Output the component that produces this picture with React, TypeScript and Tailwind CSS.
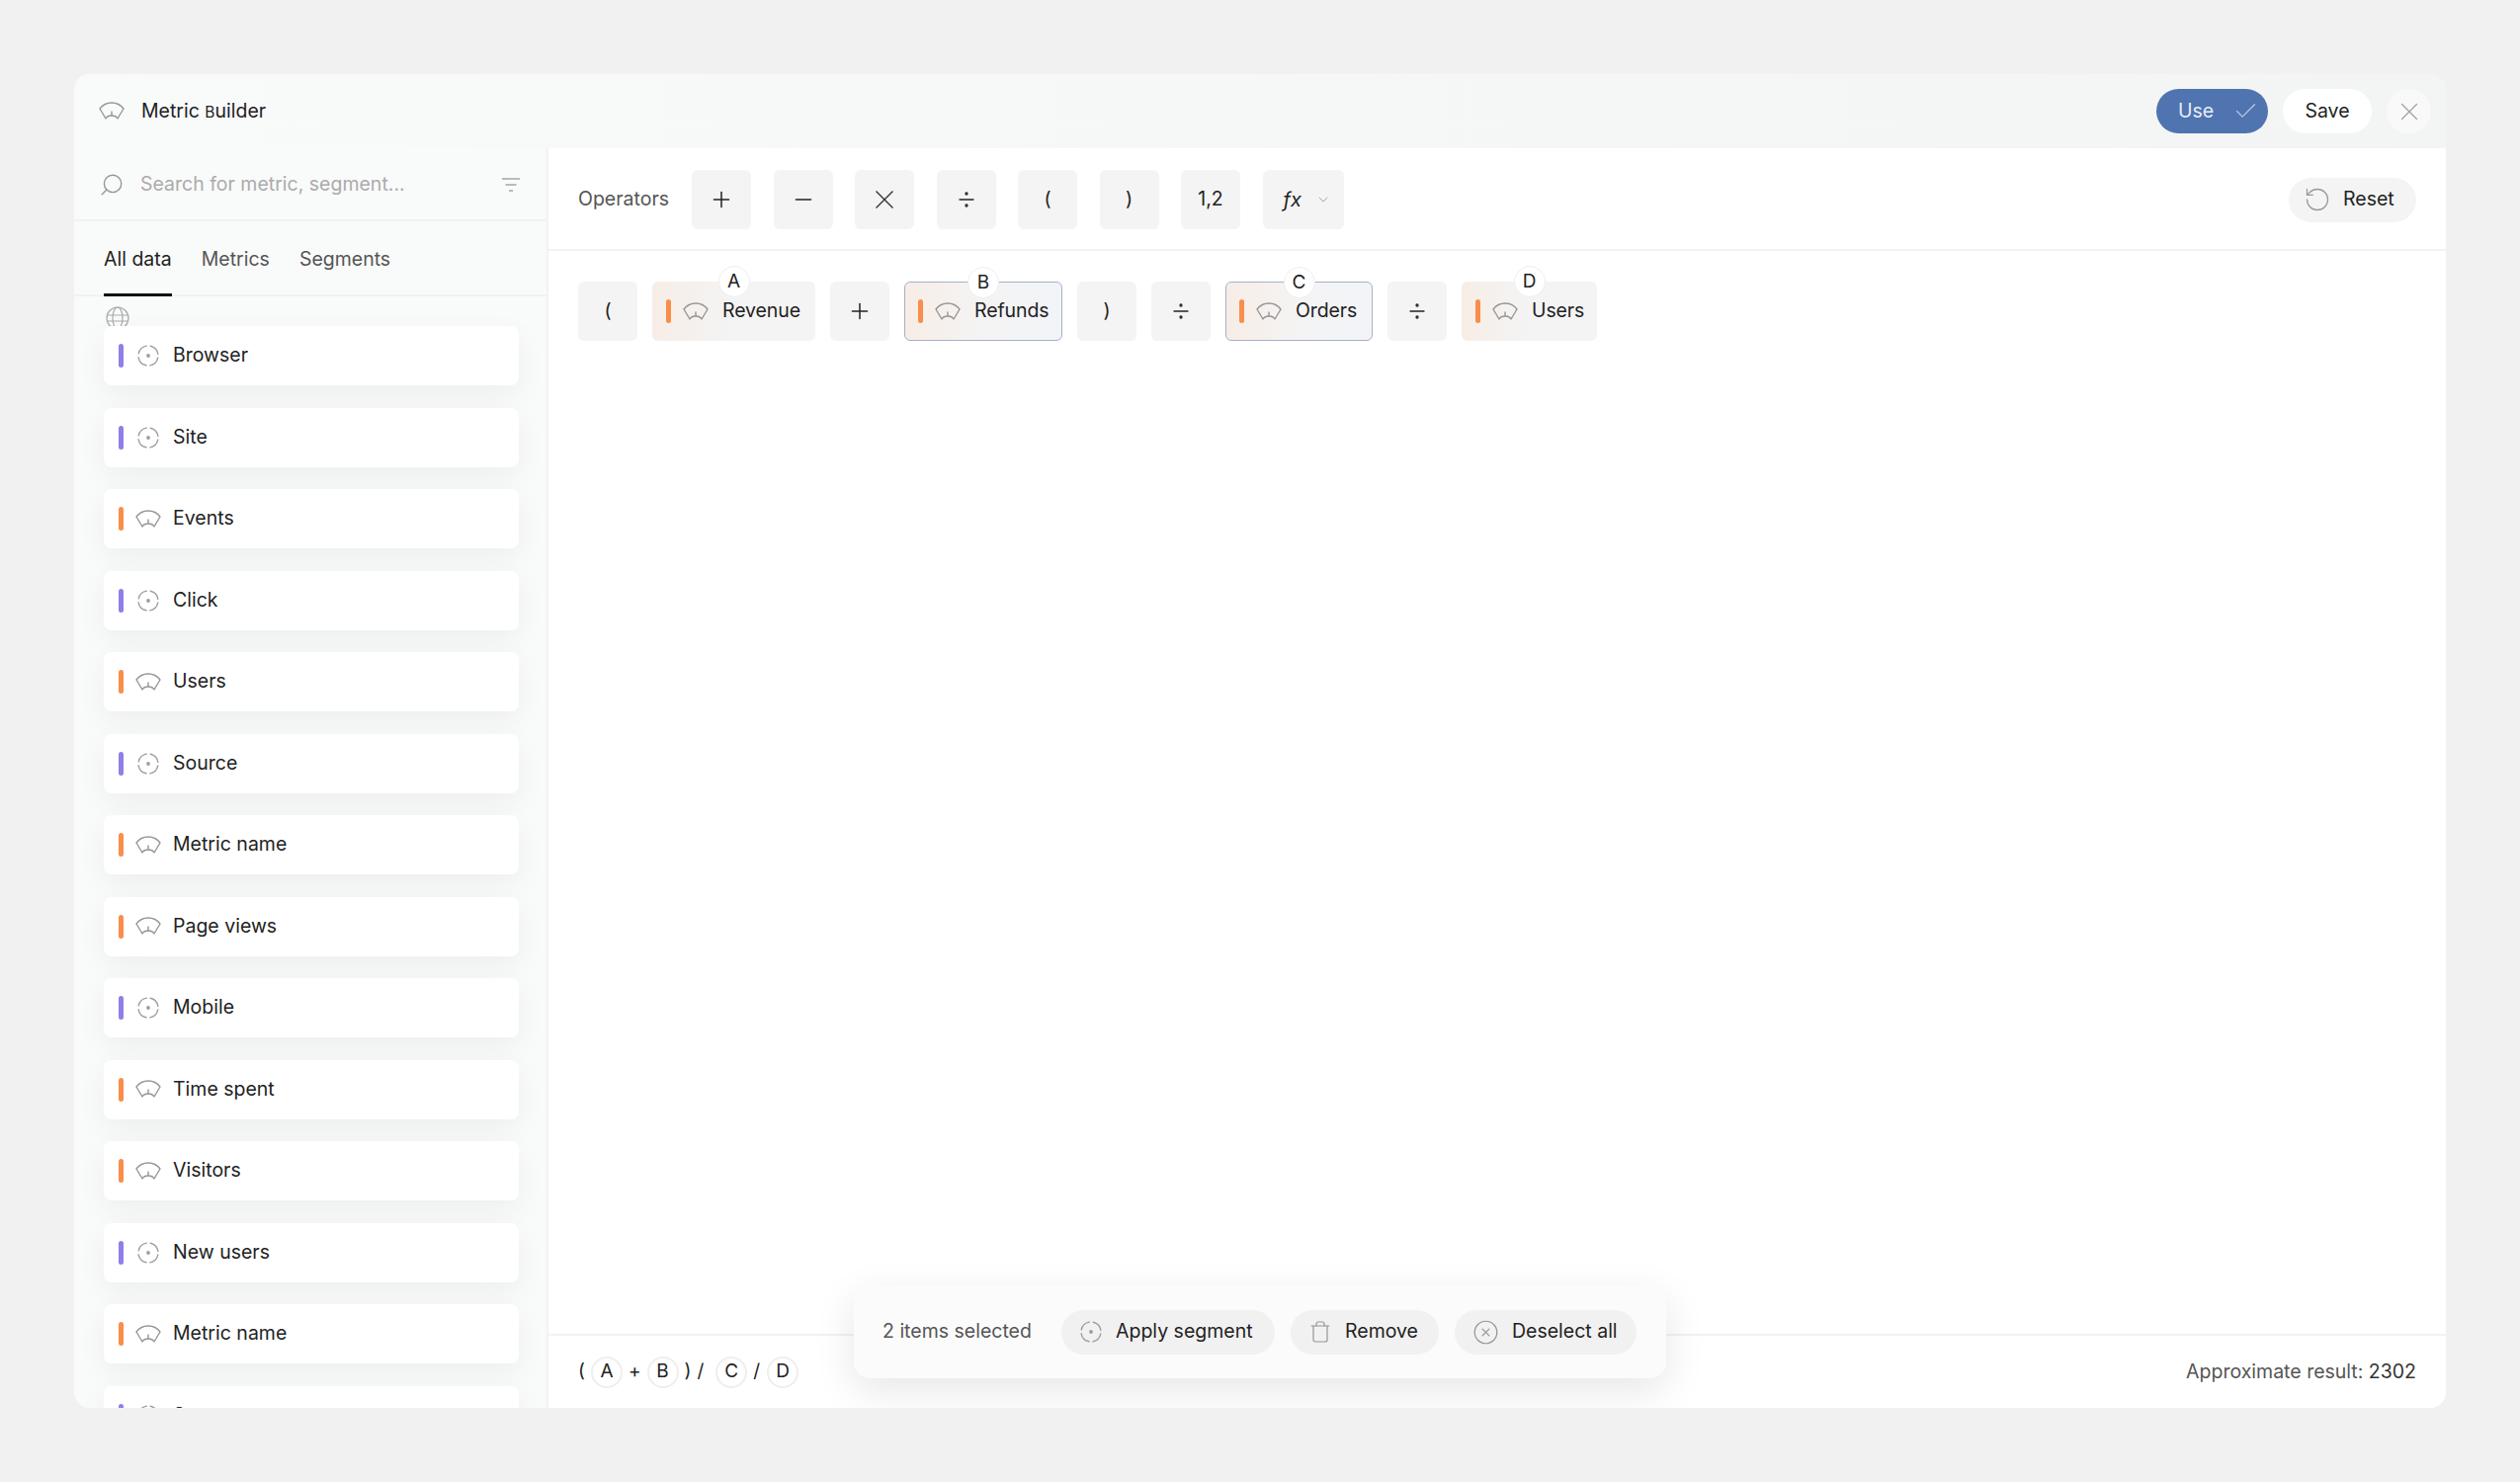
import React from 'react'
import { Search, X, Check, ChevronDown, RotateCcw, Trash, Plus, Minus, Divide, CircleX } from 'lucide-react'

type ItemKind = 'metric' | 'segment'

interface ListItem {
  name: string
  kind: ItemKind
}

const items: ListItem[] = [
  { name: 'Browser', kind: 'segment' },
  { name: 'Site', kind: 'segment' },
  { name: 'Events', kind: 'metric' },
  { name: 'Click', kind: 'segment' },
  { name: 'Users', kind: 'metric' },
  { name: 'Source', kind: 'segment' },
  { name: 'Metric name', kind: 'metric' },
  { name: 'Page views', kind: 'metric' },
  { name: 'Mobile', kind: 'segment' },
  { name: 'Time spent', kind: 'metric' },
  { name: 'Visitors', kind: 'metric' },
  { name: 'New users', kind: 'segment' },
  { name: 'Metric name', kind: 'metric' },
  { name: 'Source', kind: 'segment' },
]

// Fan shaped gauge used for metrics
const MetricIcon = () => (
  <svg width="26" height="19" viewBox="0 0 26 19" fill="none" stroke="#969696" strokeWidth="1.4" strokeLinejoin="round" className="shrink-0">
    <path d="M1 7C4 3 8 1 13 1s9 2 12 6l-6 10c-1-2-3.500-3-6-3s-5 1-6 3L1 7Z" />
    <path d="M13 14V9.500" />
  </svg>
)

// Dashed ring with a dot used for segments
const SegmentIcon = () => (
  <svg width="24" height="24" viewBox="0 0 24 24" fill="none" stroke="#9e9e9e" strokeWidth="1.4" strokeLinecap="round" className="shrink-0">
    <circle cx="12" cy="12" r="10" strokeDasharray="11.7 4" strokeDashoffset="-2" />
    <circle cx="12" cy="12" r="1.900" fill="#9e9e9e" stroke="none" />
  </svg>
)

const FilterIcon = () => (
  <svg width="20" height="16" viewBox="0 0 20 16" fill="none" stroke="#a5a5a5" strokeWidth="1.3">
    <path d="M1 2h18M4.500 8h11M8 14h4" />
  </svg>
)

const GlobeIcon = () => (
  <svg width="24" height="24" viewBox="0 0 24 24" fill="none" stroke="#a9a9a9" strokeWidth="1.2">
    <circle cx="12" cy="12" r="11" />
    <ellipse cx="12" cy="12" rx="5" ry="11" />
    <path d="M1 9h22M1 15h22" />
  </svg>
)

const TimesIcon = () => (
  <svg width="20" height="20" viewBox="0 0 20 20" fill="none" stroke="#333" strokeWidth="1.400">
    <path d="M1.500 1.500l17 17M18.500 1.500l-17 17" />
  </svg>
)

const OpButton = ({ children }: { children: React.ReactNode }) => (
  <button className="w-[60px] h-[60px] rounded-md bg-[#f4f4f4] flex items-center justify-center text-[19.500px] text-[#222] shrink-0">
    {children}
  </button>
)

const FormulaChip = ({ letter, name, selected, width }: { letter: string; name: string; selected?: boolean; width: string }) => (
  <div
    className={`relative h-[60px] ${width} rounded-md flex items-center bg-gradient-to-r from-[#f7ede6] via-[#f4f4f4] via-50% text-[19.500px] text-[#222] shrink-0 ${
      selected ? 'pl-[13px] to-[#f2f4f8] border-[1.500px] border-[#a7aecb]' : 'pl-[14px] to-[#f4f4f4]'
    }`}
  >
    <div className="w-[5px] h-[24px] rounded-sm bg-[#f98e4a]" />
    <div className="ml-[12px]">
      <MetricIcon />
    </div>
    <span className="ml-[14px] tracking-[-0.1px]">{name}</span>
    <div className="absolute left-1/2 -translate-x-1/2 -top-[16px] w-[32px] h-[32px] rounded-full bg-white border border-[#eeeeee] flex items-center justify-center text-[19px]">
      {letter}
    </div>
  </div>
)

const SmallLetter = ({ children, className }: { children: React.ReactNode; className?: string }) => (
  <div className={`w-[32px] h-[32px] rounded-full bg-white border-2 border-[#eeeeee] flex items-center justify-center ${className ?? ''}`}>
    {children}
  </div>
)

const PillButton = ({ icon, label, width }: { icon: React.ReactNode; label: string; width: string }) => (
  <button className={`h-[45px] ${width} rounded-full bg-[#f1f1f1] flex items-center pl-[18px] gap-[13px] text-[19.500px] text-[#222]`}>
    {icon}
    <span>{label}</span>
  </button>
)

const Sidebar = () => (
  <div className="w-[480px] shrink-0 flex flex-col min-h-0 border-r-2 border-[#f2f3f3]">
    {/* Search */}
    <div className="h-[74px] shrink-0 flex items-center pl-[25px] pr-[26px] pt-[2px] border-b-2 border-[#f1f2f2]">
      <Search className="w-[26px] h-[26px] text-[#969696] -scale-x-100" strokeWidth={1.300} />
      <span className="ml-[16px] text-[19.500px] text-[#ababab] flex-1">Search for metric, segment...</span>
      <FilterIcon />
    </div>
    {/* Tabs */}
    <div className="h-[76px] shrink-0 flex gap-[30px] px-[30px] pt-[4px] border-b-2 border-[#f1f2f2] text-[19.500px]">
      <div className="relative flex items-center text-[#222]">
        All data
        <div className="absolute left-0 right-0 -bottom-[2px] h-[3px] bg-[#111]" />
      </div>
      <div className="flex items-center text-[#555]">Metrics</div>
      <div className="flex items-center text-[#555]">Segments</div>
    </div>
    {/* List */}
    <div className="relative flex-1 min-h-0 overflow-hidden pl-[30px] pr-[28px] pt-[30px] flex flex-col gap-[22.500px]">
      <div className="absolute left-[32px] top-[10px]">
        <GlobeIcon />
      </div>
      {items.map((item, i) => (
        <div
          key={i}
          className="relative h-[60px] shrink-0 rounded-lg bg-white shadow-[0_10px_30px_rgba(0,0,0,0.05)] flex items-center pl-[15px] text-[19.500px] text-[#222]"
        >
          <div className={`w-[5px] h-[24px] rounded-sm ${item.kind === 'metric' ? 'bg-[#f98e4a]' : 'bg-[#8f7fe6]'}`} />
          <div className="w-[28px] ml-[11px] flex justify-center">
            {item.kind === 'metric' ? <MetricIcon /> : <SegmentIcon />}
          </div>
          <span className="ml-[11px]">{item.name}</span>
        </div>
      ))}
    </div>
  </div>
)

const App = () => {
  return (
    <div className="w-[2550px] h-[1500px] bg-[#f1f1f1] p-[75px] font-['Inter',sans-serif] overflow-hidden">
      <div className="relative w-[2400px] h-[1350px] rounded-2xl overflow-hidden bg-[#f9fafa] flex flex-col">
        {/* Header */}
        <div className="h-[75px] shrink-0 flex items-center pl-[25px] pr-[15px] bg-gradient-to-r from-[#f9fafa] to-[#f3f4f4]">
          <MetricIcon />
          <span className="ml-[17px] text-[19.500px] text-[#222]">
            Metric <span className="text-[15.500px]">B</span>uilder
          </span>
          <div className="ml-auto flex items-center gap-[15px]">
            <button className="w-[113px] h-[45px] rounded-full bg-[#4f74b0] flex items-center justify-between pl-[22px] pr-[9px] text-[19.500px] text-[#e8eef7]">
              Use
              <Check className="w-[27px] h-[27px] text-[#b7c6de]" strokeWidth={1.200} />
            </button>
            <button className="w-[90px] h-[45px] rounded-full bg-white text-[19.500px] text-[#222] flex items-center justify-center">Save</button>
            <button className="w-[45px] h-[45px] rounded-full bg-[#f9f9f9] flex items-center justify-center">
              <X className="w-[30px] h-[30px] text-[#a3a3a3]" strokeWidth={1.100} />
            </button>
          </div>
        </div>

        <div className="flex-1 min-h-0 flex">
          <Sidebar />

          {/* Main */}
          <div className="flex-1 min-w-0 bg-white flex flex-col">
            {/* Operators */}
            <div className="h-[104px] shrink-0 flex items-center pt-[2px] pl-[30px] pr-[30px] border-b-2 border-[#f2f2f2]">
              <span className="text-[19.500px] text-[#555] w-[115px]">Operators</span>
              <div className="flex gap-[22.500px]">
                <OpButton><Plus className="w-[26px] h-[26px]" strokeWidth={1.400} /></OpButton>
                <OpButton><Minus className="w-[26px] h-[26px]" strokeWidth={1.400} /></OpButton>
                <OpButton><TimesIcon /></OpButton>
                <OpButton><Divide className="w-[24px] h-[24px]" strokeWidth={1.300} /></OpButton>
                <OpButton>(</OpButton>
                <OpButton>)</OpButton>
                <OpButton>1,2</OpButton>
                <button className="w-[82px] h-[60px] rounded-md bg-[#f4f4f4] flex items-center pl-[21px] gap-[14px] text-[20px] italic text-[#222]">
                  fx
                  <ChevronDown className="w-[16px] h-[16px] text-[#9a9a9a]" strokeWidth={1.300} />
                </button>
              </div>
              <button className="ml-auto h-[45px] w-[129px] rounded-full bg-[#f4f4f4] flex items-center pl-[15px] gap-[12px] text-[19.500px] text-[#222]">
                <RotateCcw className="w-[28px] h-[28px] text-[#9a9a9a]" strokeWidth={1.100} />
                Reset
              </button>
            </div>

            {/* Formula */}
            <div className="flex-1 min-h-0 px-[30px] pt-[31px]">
              <div className="flex gap-[15px]">
                <OpButton>(</OpButton>
                <FormulaChip letter="A" name="Revenue" width="w-[165px]" />
                <OpButton><Plus className="w-[26px] h-[26px]" strokeWidth={1.400} /></OpButton>
                <FormulaChip letter="B" name="Refunds" width="w-[160px]" selected />
                <OpButton>)</OpButton>
                <OpButton><Divide className="w-[24px] h-[24px]" strokeWidth={1.300} /></OpButton>
                <FormulaChip letter="C" name="Orders" width="w-[149px]" selected />
                <OpButton><Divide className="w-[24px] h-[24px]" strokeWidth={1.300} /></OpButton>
                <FormulaChip letter="D" name="Users" width="w-[137px]" />
              </div>
            </div>

            {/* Footer */}
            <div className="h-[75px] shrink-0 border-t-2 border-[#f2f2f2] flex items-center pl-[30px] pr-[30px] text-[19.500px] text-[#222]">
              <div className="flex items-center gap-[6px] text-[19px]">
                <span>(</span>
                <SmallLetter>A</SmallLetter>
                <span>+</span>
                <SmallLetter>B</SmallLetter>
                <span>)</span>
                <span>/</span>
                <SmallLetter className="ml-[6px]">C</SmallLetter>
                <span>/</span>
                <SmallLetter className="ml-[1px]">D</SmallLetter>
              </div>
              <div className="ml-auto text-[#555]">
                Approximate result: <span className="text-[#333]">2302</span>
              </div>
            </div>
          </div>
        </div>

        {/* Selection toolbar */}
        <div className="absolute left-[789px] top-[1226px] w-[822px] h-[94px] rounded-2xl bg-[#fbfbfb] shadow-[0_12px_40px_rgba(0,0,0,0.10)] flex items-center pl-[29px] text-[19.500px]">
          <span className="text-[#555] w-[181px]">2 items selected</span>
          <div className="flex gap-[16px]">
            <PillButton icon={<SegmentIcon />} label="Apply segment" width="w-[216px]" />
            <PillButton icon={<Trash className="w-[24px] h-[24px] text-[#969696]" strokeWidth={1.200} />} label="Remove" width="w-[150px]" />
            <PillButton icon={<CircleX className="w-[27px] h-[27px] text-[#969696]" strokeWidth={1.100} />} label="Deselect all" width="w-[184px]" />
          </div>
        </div>
      </div>
    </div>
  )
}

export default App
